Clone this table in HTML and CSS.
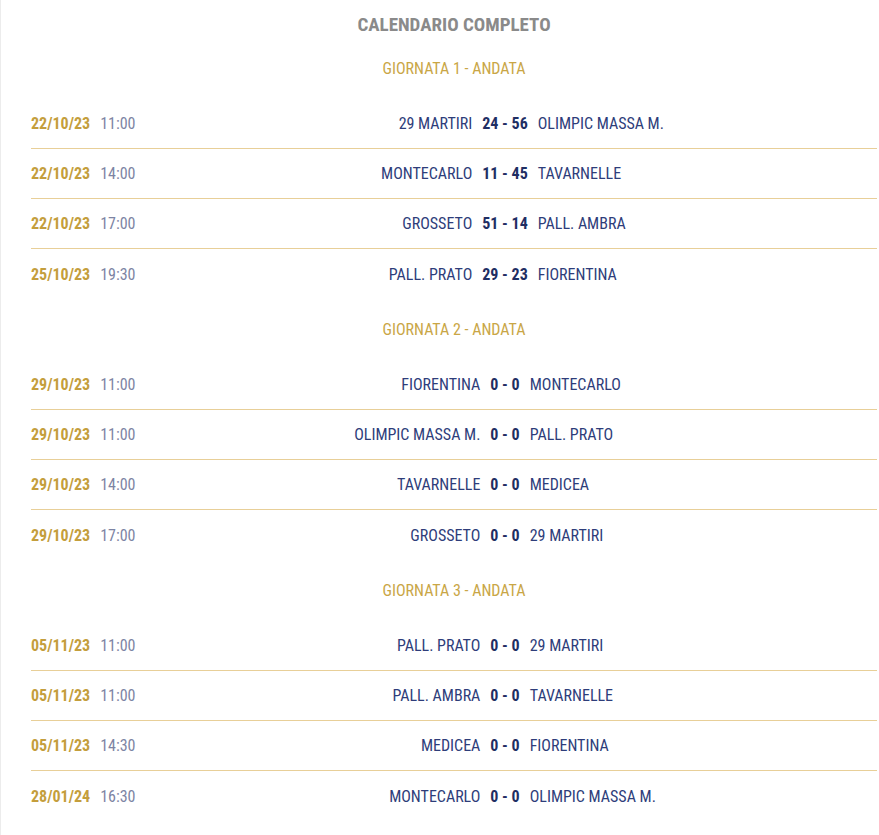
FILE: index.html
```html
<!DOCTYPE html>
<html lang="it">
<head>
<meta charset="utf-8">
<title>Calendario completo</title>
<link rel="stylesheet" href="styles.css">
</head>
<body>
<div class="page">
  <h2 class="title">CALENDARIO COMPLETO</h2>

  <section class="round">
    <h3 class="round-title">GIORNATA 1 - ANDATA</h3>
    <div class="match"><div class="when"><span class="date">22/10/23</span><span class="time">11:00</span></div><div class="home">29 MARTIRI</div><div class="score">24 - 56</div><div class="away">OLIMPIC MASSA M.</div></div>
    <div class="match"><div class="when"><span class="date">22/10/23</span><span class="time">14:00</span></div><div class="home">MONTECARLO</div><div class="score">11 - 45</div><div class="away">TAVARNELLE</div></div>
    <div class="match"><div class="when"><span class="date">22/10/23</span><span class="time">17:00</span></div><div class="home">GROSSETO</div><div class="score">51 - 14</div><div class="away">PALL. AMBRA</div></div>
    <div class="match"><div class="when"><span class="date">25/10/23</span><span class="time">19:30</span></div><div class="home">PALL. PRATO</div><div class="score">29 - 23</div><div class="away">FIORENTINA</div></div>
  </section>

  <section class="round">
    <h3 class="round-title">GIORNATA 2 - ANDATA</h3>
    <div class="match"><div class="when"><span class="date">29/10/23</span><span class="time">11:00</span></div><div class="home">FIORENTINA</div><div class="score">0 - 0</div><div class="away">MONTECARLO</div></div>
    <div class="match"><div class="when"><span class="date">29/10/23</span><span class="time">11:00</span></div><div class="home">OLIMPIC MASSA M.</div><div class="score">0 - 0</div><div class="away">PALL. PRATO</div></div>
    <div class="match"><div class="when"><span class="date">29/10/23</span><span class="time">14:00</span></div><div class="home">TAVARNELLE</div><div class="score">0 - 0</div><div class="away">MEDICEA</div></div>
    <div class="match"><div class="when"><span class="date">29/10/23</span><span class="time">17:00</span></div><div class="home">GROSSETO</div><div class="score">0 - 0</div><div class="away">29 MARTIRI</div></div>
  </section>

  <section class="round">
    <h3 class="round-title">GIORNATA 3 - ANDATA</h3>
    <div class="match"><div class="when"><span class="date">05/11/23</span><span class="time">11:00</span></div><div class="home">PALL. PRATO</div><div class="score">0 - 0</div><div class="away">29 MARTIRI</div></div>
    <div class="match"><div class="when"><span class="date">05/11/23</span><span class="time">11:00</span></div><div class="home">PALL. AMBRA</div><div class="score">0 - 0</div><div class="away">TAVARNELLE</div></div>
    <div class="match"><div class="when"><span class="date">05/11/23</span><span class="time">14:30</span></div><div class="home">MEDICEA</div><div class="score">0 - 0</div><div class="away">FIORENTINA</div></div>
    <div class="match"><div class="when"><span class="date">28/01/24</span><span class="time">16:30</span></div><div class="home">MONTECARLO</div><div class="score">0 - 0</div><div class="away">OLIMPIC MASSA M.</div></div>
  </section>
</div>
</body>
</html>
```

FILE: styles.css
```css
* { box-sizing: border-box; }
html, body { margin: 0; padding: 0; background: #fff; }
body {
  font-family: "Roboto Condensed", "Liberation Sans Narrow", Roboto, sans-serif;
  border-left: 1px solid #ececec;
  min-height: 835px;
}
.page {
  padding: 12px 2px 0 30px;
}
.title {
  margin: 0;
  text-align: center;
  font-size: 19px;
  line-height: 26px;
  font-weight: 700;
  color: #8a8a8a;
}
.round-title {
  margin: 0;
  text-align: center;
  font-size: 16px;
  line-height: 20px;
  font-weight: 400;
  color: #c9a646;
  padding: 21px 0 20px;
}
.match {
  display: flex;
  align-items: center;
  height: 50px;
  font-size: 16px;
  border-bottom: 1px solid #e8cf98;
}
.match:last-child { border-bottom: none; }
.when {
  width: 102px;
  display: flex;
  gap: 10px;
  white-space: nowrap;
}
.date { font-weight: 700; color: #c49e3c; }
.time { color: #7d84a3; }
.home, .away { flex: 1; color: #2e3d7a; white-space: nowrap; }
.home { text-align: right; }
.score { padding: 0 10px; font-weight: 700; color: #1f2e63; white-space: nowrap; }
```
